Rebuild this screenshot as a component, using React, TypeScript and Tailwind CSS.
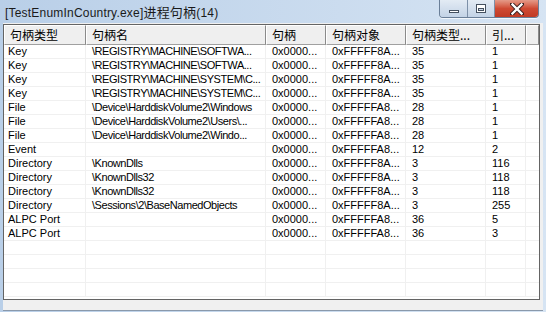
const cols = [82, 180, 60, 80, 80, 40];

const headers = ["句柄类型", "句柄名", "句柄", "句柄对象", "句柄类型...", "引..."];

const rows: string[][] = [
  ["Key", "\\REGISTRY\\MACHINE\\SOFTWA...", "0x0000...", "0xFFFFF8A...", "35", "1"],
  ["Key", "\\REGISTRY\\MACHINE\\SOFTWA...", "0x0000...", "0xFFFFF8A...", "35", "1"],
  ["Key", "\\REGISTRY\\MACHINE\\SYSTEM\\C...", "0x0000...", "0xFFFFF8A...", "35", "1"],
  ["Key", "\\REGISTRY\\MACHINE\\SYSTEM\\C...", "0x0000...", "0xFFFFF8A...", "35", "1"],
  ["File", "\\Device\\HarddiskVolume2\\Windows", "0x0000...", "0xFFFFFA8...", "28", "1"],
  ["File", "\\Device\\HarddiskVolume2\\Users\\...", "0x0000...", "0xFFFFFA8...", "28", "1"],
  ["File", "\\Device\\HarddiskVolume2\\Windo...", "0x0000...", "0xFFFFFA8...", "28", "1"],
  ["Event", "", "0x0000...", "0xFFFFFA8...", "12", "2"],
  ["Directory", "\\KnownDlls", "0x0000...", "0xFFFFF8A...", "3", "116"],
  ["Directory", "\\KnownDlls32", "0x0000...", "0xFFFFF8A...", "3", "118"],
  ["Directory", "\\KnownDlls32", "0x0000...", "0xFFFFF8A...", "3", "118"],
  ["Directory", "\\Sessions\\2\\BaseNamedObjects", "0x0000...", "0xFFFFF8A...", "3", "255"],
  ["ALPC Port", "", "0x0000...", "0xFFFFFA8...", "36", "5"],
  ["ALPC Port", "", "0x0000...", "0xFFFFFA8...", "36", "3"],
  ["", "", "", "", "", ""],
  ["", "", "", "", "", ""],
  ["", "", "", "", "", ""],
  ["", "", "", "", "", ""],
];

function CaptionButtons() {
  return (
    <div className="flex self-start mr-[7px] h-[18px] rounded-b-[4px] border border-t-0 border-[#6a7f98] overflow-hidden shadow-[0_1px_0_rgba(255,255,255,0.7)]">
      <div className="w-[28px] h-full flex items-end justify-center pb-[4px] bg-gradient-to-b from-[#e3ebf4] to-[#c3d3e6] border-r border-[#7d90a8]">
        <div className="w-[10px] h-[3px] bg-white border border-[#44505f]" />
      </div>
      <div className="w-[27px] h-full flex items-center justify-center bg-gradient-to-b from-[#e3ebf4] to-[#c3d3e6] border-r border-[#7d90a8]">
        <div className="w-[10px] h-[9px] bg-white border border-[#44505f] flex items-center justify-center">
          <div className="w-[6px] h-[3px] mt-[1px] bg-[#c9d6e6] border border-[#44505f]" />
        </div>
      </div>
      <div className="w-[43px] h-full flex items-center justify-center bg-gradient-to-b from-[#e49a88] via-[#cf4a33] to-[#c03a24]">
        <svg width="14" height="12" viewBox="0 0 14 12">
          <path d="M2 1 L12 11 M12 1 L2 11" stroke="#3b2020" strokeWidth="4.2" strokeLinecap="square" />
          <path d="M2.4 1.4 L11.6 10.6 M11.6 1.4 L2.4 10.6" stroke="#ffffff" strokeWidth="2.2" strokeLinecap="square" />
        </svg>
      </div>
    </div>
  );
}

export default function App() {
  return (
    <div className="w-[546px] h-[312px] overflow-hidden flex flex-col bg-gradient-to-r from-[#b9cfe8] to-[#d6e4f3] font-['Liberation_Sans','Noto_Sans_CJK_SC',sans-serif] text-black">
      <header className="h-[23px] flex items-center shrink-0">
        <span className="pl-[5px] text-[12px] leading-none text-[#1a1a1a] tracking-[0.2px]">
          [TestEnumInCountry.exe]<span className="font-['Noto_Sans_CJK_SC',sans-serif] text-[13px]">进程句柄</span>(14)
        </span>
        <div className="ml-auto self-start">
          <CaptionButtons />
        </div>
      </header>

      <main className="mx-[3px] h-[287px] bg-[#f0f0f0] flex flex-col">
        <div className="mt-[1px] mr-[3px] h-[276px] border border-[#646464] bg-white overflow-hidden">
          <div className="flex h-[20px]">
            {headers.map((h, i) => (
              <div
                key={i}
                style={{ width: cols[i] }}
                className="shrink-0 h-full bg-[#efefef] border-t border-l border-t-white border-l-white border-r border-r-[#8a8a8a] border-b border-b-[#a0a0a0] pl-[5px] flex items-center overflow-hidden whitespace-nowrap font-['Noto_Sans_CJK_SC',sans-serif] text-[12px] leading-none"
              >
                {h}
              </div>
            ))}
            <div className="flex-1 h-full bg-[#efefef] border-t border-l border-t-white border-l-white border-r border-r-[#8a8a8a] border-b border-b-[#a0a0a0]" />
          </div>
          {rows.map((r, ri) => (
            <div key={ri} className="flex h-[14px] border-b border-[#f0f0f0]">
              {r.map((c, ci) => (
                <div
                  key={ci}
                  style={{ width: cols[ci] }}
                  className={`shrink-0 h-full border-r border-[#f0f0f0] flex items-center overflow-hidden whitespace-nowrap text-[11px] leading-none ${ci === 0 ? "pl-[4px]" : "pl-[6px]"} ${ci === 1 ? "tracking-[-0.45px]" : ""}`}
                >
                  {c}
                </div>
              ))}
              <div className="flex-1 h-full" />
            </div>
          ))}
        </div>
      </main>
      <div className="h-[2px] mx-[3px] border-t border-[#8a99ab]" />
    </div>
  );
}
